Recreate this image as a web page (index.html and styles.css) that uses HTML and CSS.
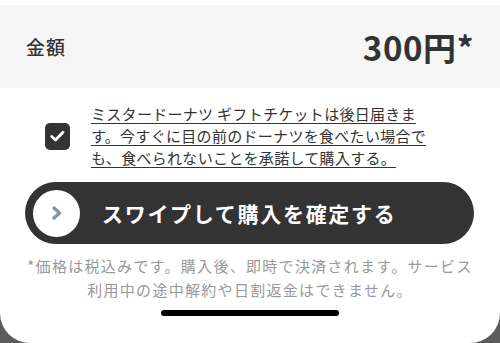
FILE: index.html
```html
<!DOCTYPE html>
<html lang="ja">
<head>
<meta charset="utf-8">
<link rel="stylesheet" href="styles.css">
</head>
<body>
<div class="screen">
  <div class="amount">
    <span class="label">金額</span>
    <span class="price">300円*</span>
  </div>
  <div class="agree">
    <span class="check">
      <svg width="15" height="12" viewBox="0 0 15 12"><path d="M1.8 6.5 L5.5 10 L13 2.2" fill="none" stroke="#fff" stroke-width="2.8" stroke-linecap="round" stroke-linejoin="round"/></svg>
    </span>
    <p class="agree-text">ミスタードーナツ ギフトチケットは後日届きます。今すぐに目の前のドーナツを食べたい場合でも、食べられないことを承諾して購入する。</p>
  </div>
  <div class="swipe">
    <span class="knob">
      <svg width="14" height="16" viewBox="0 0 14 16"><path d="M4 3 L9.5 8 L4 13" fill="none" stroke="#8794a6" stroke-width="3.4" stroke-linecap="round" stroke-linejoin="round"/></svg>
    </span>
    <span class="swipe-text">スワイプして購入を確定する</span>
  </div>
  <p class="note">*価格は税込みです。購入後、即時で決済されます。サービス<br>利用中の途中解約や日割返金はできません。</p>
  <div class="home"></div>
</div>
</body>
</html>
```

FILE: styles.css
```css
* { box-sizing: border-box; }
html, body { margin: 0; padding: 0; }
body {
  background: #5a5a5a;
  font-family: "Noto Sans CJK JP", "Noto Sans", sans-serif;
  color: #333;
}
.screen {
  width: 500px;
  height: 343px;
  background: #fff;
  border-radius: 0 0 30px 30px;
  padding-top: 5px;
  display: flex;
  flex-direction: column;
  overflow: hidden;
}
.amount {
  background: #f6f6f6;
  height: 83px;
  display: flex;
  align-items: center;
  justify-content: space-between;
  padding: 0 26px 0 26px;
}
.label {
  font-size: 19px;
  font-weight: 500;
  letter-spacing: 1px;
}
.price {
  font-size: 33px;
  font-weight: 700;
  letter-spacing: 0.6px;
}
.agree {
  display: flex;
  align-items: center;
  padding: 15px 0 0 45px;
  gap: 21px;
}
.check {
  width: 25px;
  height: 27px;
  border-radius: 5px;
  background: #333;
  display: flex;
  align-items: center;
  justify-content: center;
  flex: none;
}
.agree-text {
  margin: 0;
  width: 345px;
  font-size: 15px;
  line-height: 22px;
  letter-spacing: 0.3px;
  text-decoration: underline;
  text-underline-offset: 3px;
  color: #333;
}
.swipe {
  margin: 13px 26px 0 25px;
  height: 62px;
  border-radius: 31px;
  background: #333;
  display: flex;
  align-items: center;
  padding-left: 8px;
  gap: 22px;
}
.knob {
  width: 47px;
  height: 47px;
  border-radius: 50%;
  background: #fff;
  display: flex;
  align-items: center;
  justify-content: center;
}
.swipe-text {
  color: #fff;
  font-size: 21px;
  font-weight: 700;
  letter-spacing: 1.7px;
}
.note {
  margin: 10px 0 0 0;
  text-align: center;
  font-size: 15px;
  line-height: 24px;
  letter-spacing: 1.3px;
  color: #999;
}
.home {
  margin: 8px auto 0 auto;
  width: 178px;
  height: 6px;
  border-radius: 3px;
  background: #000;
}
```
